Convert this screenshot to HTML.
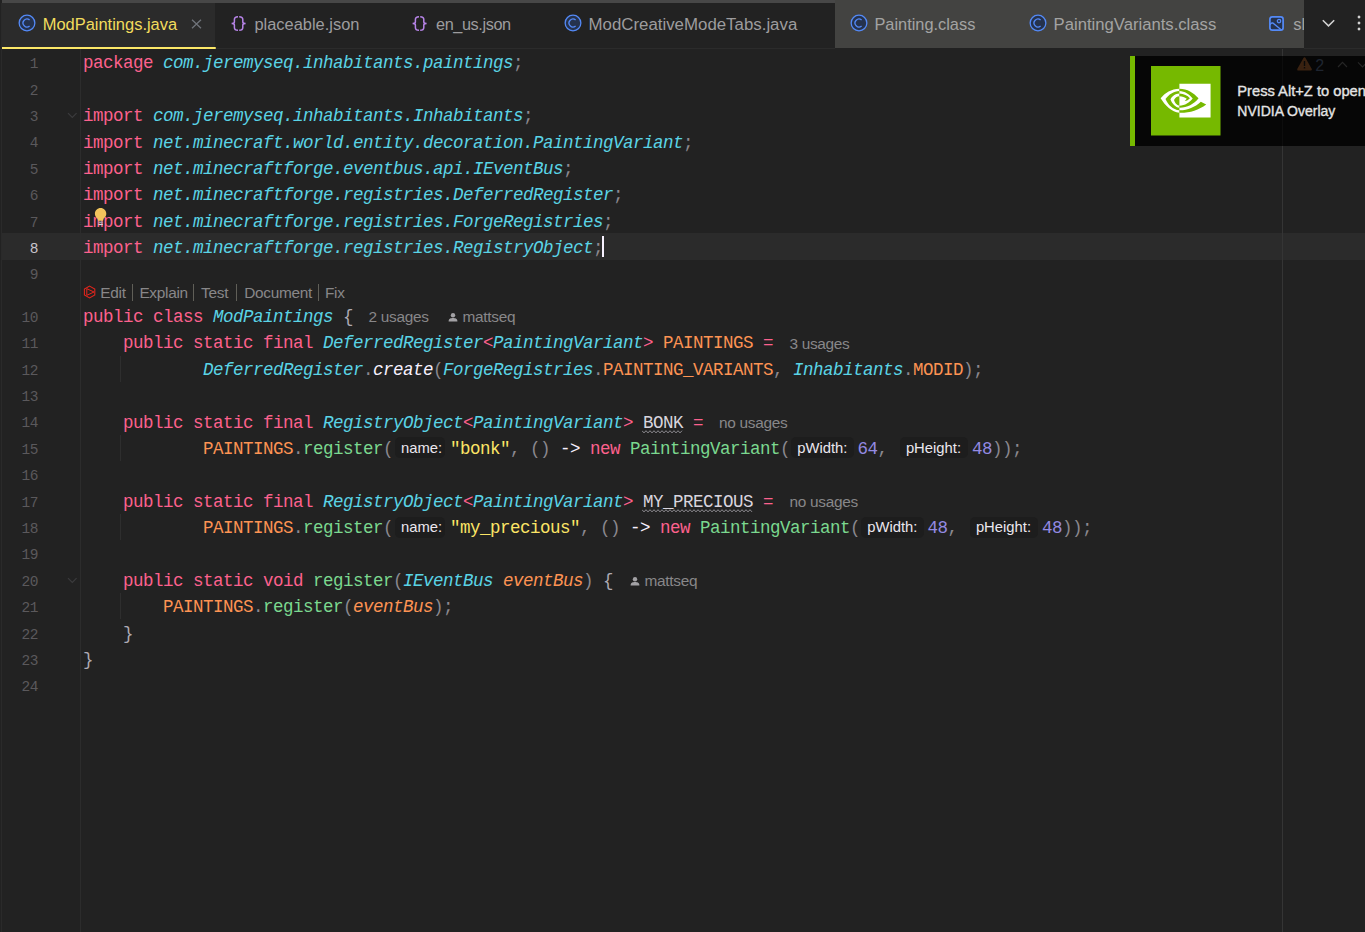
<!DOCTYPE html><html><head><meta charset="utf-8"><style>
*{margin:0;padding:0;box-sizing:border-box}
html,body{width:1365px;height:932px;overflow:hidden;background:#222222}
body{position:relative;font-family:"Liberation Sans",sans-serif}
.a{position:absolute}
.m{position:absolute;font-family:"Liberation Mono",monospace;font-size:17.5px;letter-spacing:-0.500px;white-space:pre;line-height:20px}
.i{font-style:italic}
.ln{position:absolute;font-family:"Liberation Mono",monospace;font-size:14.5px;letter-spacing:-0.5px;white-space:pre;line-height:20px;color:#5b595c;text-align:right;width:60px}
.tab{position:absolute;font-size:16.5px;white-space:pre;line-height:20px;color:#939293}
.hint{position:absolute;font-size:14.8px;white-space:pre;line-height:20px;color:#848286}
.inl{position:absolute;height:21px;border-radius:5px;background:#1d1d1d}
.inlt{position:absolute;font-size:14.8px;white-space:pre;line-height:20px;color:#ebe7ee}
</style></head><body>
<div class="a" style="left:1px;top:3px;width:1px;height:929px;background:#2a2a2a"></div>
<div class="a" style="left:2px;top:0;width:1302px;height:3px;background:#474747"></div>
<div class="a" style="left:835px;top:0;width:469px;height:48px;background:#434341"></div>
<div class="a" style="left:2px;top:3px;width:213px;height:45px;background:#2b2b2b"></div>
<div class="a" style="left:0;top:48px;width:835px;height:1px;background:#2b2b2b"></div>
<div class="a" style="left:1304px;top:48px;width:61px;height:1px;background:#2b2b2b"></div>
<div class="a" style="left:2px;top:46.7px;width:214px;height:2.5px;background:#fde868;border-radius:0 1px 1px 0"></div>
<div class="a" style="left:2px;top:233px;width:1363px;height:27px;background:#2b2b2b"></div>
<div class="a" style="left:80px;top:49px;width:1px;height:883px;background:#2c2c2c"></div>
<div class="a" style="left:1282px;top:49px;width:1px;height:883px;background:#353535"></div>
<div class="ln" style="left:-22px;top:54.24px;color:#5b595c">1</div>
<div class="ln" style="left:-22px;top:80.64px;color:#5b595c">2</div>
<div class="ln" style="left:-22px;top:107.04px;color:#5b595c">3</div>
<div class="ln" style="left:-22px;top:133.44px;color:#5b595c">4</div>
<div class="ln" style="left:-22px;top:159.84px;color:#5b595c">5</div>
<div class="ln" style="left:-22px;top:186.24px;color:#5b595c">6</div>
<div class="ln" style="left:-22px;top:212.64px;color:#5b595c">7</div>
<div class="ln" style="left:-22px;top:239.04px;color:#c8c4cc">8</div>
<div class="ln" style="left:-22px;top:265.44px;color:#5b595c">9</div>
<div class="ln" style="left:-22px;top:307.74px;color:#5b595c">10</div>
<div class="ln" style="left:-22px;top:334.14px;color:#5b595c">11</div>
<div class="ln" style="left:-22px;top:360.54px;color:#5b595c">12</div>
<div class="ln" style="left:-22px;top:386.94px;color:#5b595c">13</div>
<div class="ln" style="left:-22px;top:413.34px;color:#5b595c">14</div>
<div class="ln" style="left:-22px;top:439.74px;color:#5b595c">15</div>
<div class="ln" style="left:-22px;top:466.14px;color:#5b595c">16</div>
<div class="ln" style="left:-22px;top:492.54px;color:#5b595c">17</div>
<div class="ln" style="left:-22px;top:518.94px;color:#5b595c">18</div>
<div class="ln" style="left:-22px;top:545.34px;color:#5b595c">19</div>
<div class="ln" style="left:-22px;top:571.74px;color:#5b595c">20</div>
<div class="ln" style="left:-22px;top:598.14px;color:#5b595c">21</div>
<div class="ln" style="left:-22px;top:624.54px;color:#5b595c">22</div>
<div class="ln" style="left:-22px;top:650.94px;color:#5b595c">23</div>
<div class="ln" style="left:-22px;top:677.34px;color:#5b595c">24</div>
<div class="m" style="left:83.00px;top:53.44px;color:#fc618d">package </div>
<div class="m" style="left:163.00px;top:53.44px;color:#5ad4e6;font-style:italic">com.jeremyseq.inhabitants.paintings</div>
<div class="m" style="left:513.00px;top:53.44px;color:#8b888f">;</div>
<div class="m" style="left:83.00px;top:106.24px;color:#fc618d">import </div>
<div class="m" style="left:153.00px;top:106.24px;color:#5ad4e6;font-style:italic">com.jeremyseq.inhabitants.Inhabitants</div>
<div class="m" style="left:523.00px;top:106.24px;color:#8b888f">;</div>
<div class="m" style="left:83.00px;top:132.64px;color:#fc618d">import </div>
<div class="m" style="left:153.00px;top:132.64px;color:#5ad4e6;font-style:italic">net.minecraft.world.entity.decoration.PaintingVariant</div>
<div class="m" style="left:683.00px;top:132.64px;color:#8b888f">;</div>
<div class="m" style="left:83.00px;top:159.04px;color:#fc618d">import </div>
<div class="m" style="left:153.00px;top:159.04px;color:#5ad4e6;font-style:italic">net.minecraftforge.eventbus.api.IEventBus</div>
<div class="m" style="left:563.00px;top:159.04px;color:#8b888f">;</div>
<div class="m" style="left:83.00px;top:185.44px;color:#fc618d">import </div>
<div class="m" style="left:153.00px;top:185.44px;color:#5ad4e6;font-style:italic">net.minecraftforge.registries.DeferredRegister</div>
<div class="m" style="left:613.00px;top:185.44px;color:#8b888f">;</div>
<div class="m" style="left:83.00px;top:211.84px;color:#fc618d">import </div>
<div class="m" style="left:153.00px;top:211.84px;color:#5ad4e6;font-style:italic">net.minecraftforge.registries.ForgeRegistries</div>
<div class="m" style="left:603.00px;top:211.84px;color:#8b888f">;</div>
<div class="m" style="left:83.00px;top:238.24px;color:#fc618d">import </div>
<div class="m" style="left:153.00px;top:238.24px;color:#5ad4e6;font-style:italic">net.minecraftforge.registries.RegistryObject</div>
<div class="m" style="left:593.00px;top:238.24px;color:#8b888f">;</div>
<div class="m" style="left:83.00px;top:306.94px;color:#fc618d">public class </div>
<div class="m" style="left:213.00px;top:306.94px;color:#5ad4e6;font-style:italic">ModPaintings</div>
<div class="m" style="left:333.00px;top:306.94px;color:#aeaab3"> {</div>
<div class="m" style="left:83.00px;top:333.34px;color:#fc618d">    public static final </div>
<div class="m" style="left:323.00px;top:333.34px;color:#5ad4e6;font-style:italic">DeferredRegister</div>
<div class="m" style="left:483.00px;top:333.34px;color:#fc618d">&lt;</div>
<div class="m" style="left:493.00px;top:333.34px;color:#5ad4e6;font-style:italic">PaintingVariant</div>
<div class="m" style="left:643.00px;top:333.34px;color:#fc618d">&gt;</div>
<div class="m" style="left:653.00px;top:333.34px;color:#fd9353"> PAINTINGS</div>
<div class="m" style="left:753.00px;top:333.34px;color:#fc618d"> =</div>
<div class="m" style="left:83.00px;top:359.74px;color:#5ad4e6;font-style:italic">            DeferredRegister</div>
<div class="m" style="left:363.00px;top:359.74px;color:#8b888f">.</div>
<div class="m" style="left:373.00px;top:359.74px;color:#f7f1ff;font-style:italic">create</div>
<div class="m" style="left:433.00px;top:359.74px;color:#8b888f">(</div>
<div class="m" style="left:443.00px;top:359.74px;color:#5ad4e6;font-style:italic">ForgeRegistries</div>
<div class="m" style="left:593.00px;top:359.74px;color:#8b888f">.</div>
<div class="m" style="left:603.00px;top:359.74px;color:#fd9353">PAINTING_VARIANTS</div>
<div class="m" style="left:773.00px;top:359.74px;color:#8b888f">, </div>
<div class="m" style="left:793.00px;top:359.74px;color:#5ad4e6;font-style:italic">Inhabitants</div>
<div class="m" style="left:903.00px;top:359.74px;color:#8b888f">.</div>
<div class="m" style="left:913.00px;top:359.74px;color:#fd9353">MODID</div>
<div class="m" style="left:963.00px;top:359.74px;color:#8b888f">);</div>
<div class="m" style="left:83.00px;top:412.54px;color:#fc618d">    public static final </div>
<div class="m" style="left:323.00px;top:412.54px;color:#5ad4e6;font-style:italic">RegistryObject</div>
<div class="m" style="left:463.00px;top:412.54px;color:#fc618d">&lt;</div>
<div class="m" style="left:473.00px;top:412.54px;color:#5ad4e6;font-style:italic">PaintingVariant</div>
<div class="m" style="left:623.00px;top:412.54px;color:#fc618d">&gt; </div>
<div class="m" style="left:643.00px;top:412.54px;color:#d9d5de">BONK</div>
<svg class="a" style="left:642.00px;top:430.00px" width="41" height="4" viewBox="0 0 41 4"><path d="M0.0 0.7L2.0 2.9L4.0 0.7L6.0 2.9L8.0 0.7L10.0 2.9L12.0 0.7L14.0 2.9L16.0 0.7L18.0 2.9L20.0 0.7L22.0 2.9L24.0 0.7L26.0 2.9L28.0 0.7L30.0 2.9L32.0 0.7L34.0 2.9L36.0 0.7L38.0 2.9L40.0 0.7" stroke="#8d8b90" stroke-width="1" fill="none"/></svg>
<div class="m" style="left:683.00px;top:412.54px;color:#fc618d"> =</div>
<div class="m" style="left:83.00px;top:438.94px;color:#fd9353">            PAINTINGS</div>
<div class="m" style="left:293.00px;top:438.94px;color:#8b888f">.</div>
<div class="m" style="left:303.00px;top:438.94px;color:#7bd88f">register</div>
<div class="m" style="left:383.00px;top:438.94px;color:#8b888f">(</div>
<div class="inl" style="left:394.70px;top:437.40px;width:50.50px"></div>
<div class="inlt" style="left:401.00px;top:437.67px;font-size:14.8px">name:</div>
<div class="m" style="left:450.10px;top:438.94px;color:#fce566">&quot;bonk&quot;</div>
<div class="m" style="left:510.10px;top:438.94px;color:#8b888f">, () </div>
<div class="m" style="left:560.10px;top:438.94px;color:#f7f1ff">-&gt; </div>
<div class="m" style="left:590.10px;top:438.94px;color:#fc618d">new </div>
<div class="m" style="left:630.10px;top:438.94px;color:#7bd88f">PaintingVariant</div>
<div class="m" style="left:780.10px;top:438.94px;color:#8b888f">(</div>
<div class="inl" style="left:790.90px;top:437.40px;width:63.00px"></div>
<div class="inlt" style="left:797.20px;top:437.67px;font-size:14.8px">pWidth:</div>
<div class="m" style="left:857.50px;top:438.94px;color:#948ae3">64</div>
<div class="m" style="left:877.50px;top:438.94px;color:#8b888f">, </div>
<div class="inl" style="left:899.60px;top:437.40px;width:68.00px"></div>
<div class="inlt" style="left:905.90px;top:437.67px;font-size:14.8px">pHeight:</div>
<div class="m" style="left:972.00px;top:438.94px;color:#948ae3">48</div>
<div class="m" style="left:992.00px;top:438.94px;color:#8b888f">));</div>
<div class="m" style="left:83.00px;top:491.74px;color:#fc618d">    public static final </div>
<div class="m" style="left:323.00px;top:491.74px;color:#5ad4e6;font-style:italic">RegistryObject</div>
<div class="m" style="left:463.00px;top:491.74px;color:#fc618d">&lt;</div>
<div class="m" style="left:473.00px;top:491.74px;color:#5ad4e6;font-style:italic">PaintingVariant</div>
<div class="m" style="left:623.00px;top:491.74px;color:#fc618d">&gt; </div>
<div class="m" style="left:643.00px;top:491.74px;color:#d9d5de">MY_PRECIOUS</div>
<svg class="a" style="left:642.00px;top:509.20px" width="111" height="4" viewBox="0 0 111 4"><path d="M0.0 0.7L2.0 2.9L4.0 0.7L6.0 2.9L8.0 0.7L10.0 2.9L12.0 0.7L14.0 2.9L16.0 0.7L18.0 2.9L20.0 0.7L22.0 2.9L24.0 0.7L26.0 2.9L28.0 0.7L30.0 2.9L32.0 0.7L34.0 2.9L36.0 0.7L38.0 2.9L40.0 0.7L42.0 2.9L44.0 0.7L46.0 2.9L48.0 0.7L50.0 2.9L52.0 0.7L54.0 2.9L56.0 0.7L58.0 2.9L60.0 0.7L62.0 2.9L64.0 0.7L66.0 2.9L68.0 0.7L70.0 2.9L72.0 0.7L74.0 2.9L76.0 0.7L78.0 2.9L80.0 0.7L82.0 2.9L84.0 0.7L86.0 2.9L88.0 0.7L90.0 2.9L92.0 0.7L94.0 2.9L96.0 0.7L98.0 2.9L100.0 0.7L102.0 2.9L104.0 0.7L106.0 2.9L108.0 0.7L110.0 2.9" stroke="#8d8b90" stroke-width="1" fill="none"/></svg>
<div class="m" style="left:753.00px;top:491.74px;color:#fc618d"> =</div>
<div class="m" style="left:83.00px;top:518.14px;color:#fd9353">            PAINTINGS</div>
<div class="m" style="left:293.00px;top:518.14px;color:#8b888f">.</div>
<div class="m" style="left:303.00px;top:518.14px;color:#7bd88f">register</div>
<div class="m" style="left:383.00px;top:518.14px;color:#8b888f">(</div>
<div class="inl" style="left:394.70px;top:516.60px;width:50.50px"></div>
<div class="inlt" style="left:401.00px;top:516.87px;font-size:14.8px">name:</div>
<div class="m" style="left:450.10px;top:518.14px;color:#fce566">&quot;my_precious&quot;</div>
<div class="m" style="left:580.10px;top:518.14px;color:#8b888f">, () </div>
<div class="m" style="left:630.10px;top:518.14px;color:#f7f1ff">-&gt; </div>
<div class="m" style="left:660.10px;top:518.14px;color:#fc618d">new </div>
<div class="m" style="left:700.10px;top:518.14px;color:#7bd88f">PaintingVariant</div>
<div class="m" style="left:850.10px;top:518.14px;color:#8b888f">(</div>
<div class="inl" style="left:860.90px;top:516.60px;width:63.00px"></div>
<div class="inlt" style="left:867.20px;top:516.87px;font-size:14.8px">pWidth:</div>
<div class="m" style="left:927.50px;top:518.14px;color:#948ae3">48</div>
<div class="m" style="left:947.50px;top:518.14px;color:#8b888f">, </div>
<div class="inl" style="left:969.60px;top:516.60px;width:68.00px"></div>
<div class="inlt" style="left:975.90px;top:516.87px;font-size:14.8px">pHeight:</div>
<div class="m" style="left:1042.00px;top:518.14px;color:#948ae3">48</div>
<div class="m" style="left:1062.00px;top:518.14px;color:#8b888f">));</div>
<div class="m" style="left:83.00px;top:570.94px;color:#fc618d">    public static void </div>
<div class="m" style="left:313.00px;top:570.94px;color:#7bd88f">register</div>
<div class="m" style="left:393.00px;top:570.94px;color:#8b888f">(</div>
<div class="m" style="left:403.00px;top:570.94px;color:#5ad4e6;font-style:italic">IEventBus </div>
<div class="m" style="left:503.00px;top:570.94px;color:#fd9353;font-style:italic">eventBus</div>
<div class="m" style="left:583.00px;top:570.94px;color:#8b888f">) </div>
<div class="m" style="left:603.00px;top:570.94px;color:#aeaab3">{</div>
<div class="m" style="left:83.00px;top:597.34px;color:#fd9353">        PAINTINGS</div>
<div class="m" style="left:253.00px;top:597.34px;color:#8b888f">.</div>
<div class="m" style="left:263.00px;top:597.34px;color:#7bd88f">register</div>
<div class="m" style="left:343.00px;top:597.34px;color:#8b888f">(</div>
<div class="m" style="left:353.00px;top:597.34px;color:#fd9353;font-style:italic">eventBus</div>
<div class="m" style="left:433.00px;top:597.34px;color:#8b888f">);</div>
<div class="m" style="left:83.00px;top:623.74px;color:#aeaab3">    }</div>
<div class="m" style="left:83.00px;top:650.14px;color:#aeaab3">}</div>
<svg class="a" style="left:17.50px;top:14.45px" width="18" height="18" viewBox="0 0 18 18"><circle cx="9" cy="9" r="7.85" fill="#25324d" stroke="#548af7" stroke-width="1.3"/><path d="M11.6 6.1 A3.9 3.9 0 1 0 11.6 11.9" fill="none" stroke="#548af7" stroke-width="1.3"/></svg>
<div class="tab" style="left:42.70px;top:14.29px;font-size:16.47px;color:#f2dc5d">ModPaintings.java</div>
<svg class="a" style="left:191px;top:18.5px" width="11" height="10" viewBox="0 0 11 10"><path d="M1 0.7 L10 9.3 M10 0.7 L1 9.3" stroke="#70747b" stroke-width="1.25"/></svg>
<svg class="a" style="left:230.60px;top:16.20px" width="16" height="16" viewBox="0 0 16 16"><path d="M7 0.8 C4.6 0.8 3.4 1.6 3.4 3.6 V6 C3.4 7 2.6 7.5 0.6 7.5 C2.6 7.5 3.4 8 3.4 9 V11.4 C3.4 13.4 4.6 14.2 7 14.2" fill="none" stroke="#b784e8" stroke-width="1.5"/><path d="M8.2 0.8 C10.6 0.8 11.8 1.6 11.8 3.6 V6 C11.8 7 12.6 7.5 14.6 7.5 C12.6 7.5 11.8 8 11.8 9 V11.4 C11.8 13.4 10.6 14.2 8.2 14.2" fill="none" stroke="#b784e8" stroke-width="1.5"/></svg>
<div class="tab" style="left:254.40px;top:14.30px;font-size:16.44px;color:#9d9c9e">placeable.json</div>
<svg class="a" style="left:412.40px;top:16.20px" width="16" height="16" viewBox="0 0 16 16"><path d="M7 0.8 C4.6 0.8 3.4 1.6 3.4 3.6 V6 C3.4 7 2.6 7.5 0.6 7.5 C2.6 7.5 3.4 8 3.4 9 V11.4 C3.4 13.4 4.6 14.2 7 14.2" fill="none" stroke="#b784e8" stroke-width="1.5"/><path d="M8.2 0.8 C10.6 0.8 11.8 1.6 11.8 3.6 V6 C11.8 7 12.6 7.5 14.6 7.5 C12.6 7.5 11.8 8 11.8 9 V11.4 C11.8 13.4 10.6 14.2 8.2 14.2" fill="none" stroke="#b784e8" stroke-width="1.5"/></svg>
<div class="tab" style="left:436.00px;top:14.35px;font-size:16.3px;color:#9d9c9e;letter-spacing:-0.4px">en_us.json</div>
<svg class="a" style="left:563.70px;top:14.45px" width="18" height="18" viewBox="0 0 18 18"><circle cx="9" cy="9" r="7.85" fill="#25324d" stroke="#548af7" stroke-width="1.3"/><path d="M11.6 6.1 A3.9 3.9 0 1 0 11.6 11.9" fill="none" stroke="#548af7" stroke-width="1.3"/></svg>
<div class="tab" style="left:588.50px;top:14.76px;font-size:16.85px;color:#9d9c9e">ModCreativeModeTabs.java</div>
<svg class="a" style="left:849.60px;top:14.45px" width="18" height="18" viewBox="0 0 18 18"><circle cx="9" cy="9" r="7.85" fill="#25324d" stroke="#548af7" stroke-width="1.3"/><path d="M11.6 6.1 A3.9 3.9 0 1 0 11.6 11.9" fill="none" stroke="#548af7" stroke-width="1.3"/></svg>
<div class="tab" style="left:874.40px;top:14.32px;font-size:16.37px;color:#a3a3a3">Painting.class</div>
<svg class="a" style="left:1028.50px;top:14.45px" width="18" height="18" viewBox="0 0 18 18"><circle cx="9" cy="9" r="7.85" fill="#25324d" stroke="#548af7" stroke-width="1.3"/><path d="M11.6 6.1 A3.9 3.9 0 1 0 11.6 11.9" fill="none" stroke="#548af7" stroke-width="1.3"/></svg>
<div class="tab" style="left:1053.60px;top:14.82px;font-size:16.67px;color:#a3a3a3">PaintingVariants.class</div>
<svg class="a" style="left:1268px;top:15px" width="17" height="17" viewBox="0 0 17 17"><rect x="1.9" y="1.9" width="13.2" height="13.2" rx="2.4" fill="#25324d" stroke="#548af7" stroke-width="1.7"/><circle cx="11" cy="6.1" r="1.7" fill="none" stroke="#548af7" stroke-width="1.3"/><path d="M1.9 9.8 Q3.2 7.6 4.8 7.9 L13.5 15" fill="none" stroke="#548af7" stroke-width="1.3"/></svg>
<div class="a" style="left:1290px;top:0;width:14px;height:48px;overflow:hidden"><div class="tab" style="left:3.30px;top:14.38px;font-size:16.5px;color:#a3a3a3">slots</div></div>
<svg class="a" style="left:1322px;top:19px" width="13" height="9" viewBox="0 0 13 9"><path d="M0.8 1.2 L6.5 6.9 L12.2 1.2" fill="none" stroke="#d4d4d4" stroke-width="1.5"/></svg>
<svg class="a" style="left:1357.10px;top:15.20px" width="4" height="4" viewBox="0 0 4 4"><path d="M2 0.3 L3.7 2 L2 3.7 L0.3 2 Z" fill="#d6d6d6"/></svg>
<svg class="a" style="left:1357.10px;top:21.20px" width="4" height="4" viewBox="0 0 4 4"><path d="M2 0.3 L3.7 2 L2 3.7 L0.3 2 Z" fill="#d6d6d6"/></svg>
<svg class="a" style="left:1357.10px;top:27.20px" width="4" height="4" viewBox="0 0 4 4"><path d="M2 0.3 L3.7 2 L2 3.7 L0.3 2 Z" fill="#d6d6d6"/></svg>
<div class="a" style="left:120px;top:355.80px;width:1px;height:26px;background:#2e2e2e"></div>
<div class="a" style="left:120px;top:435.00px;width:1px;height:26px;background:#2e2e2e"></div>
<div class="a" style="left:120px;top:514.20px;width:1px;height:26px;background:#2e2e2e"></div>
<div class="a" style="left:120px;top:593.40px;width:1px;height:26px;background:#2e2e2e"></div>
<svg class="a" style="left:67px;top:112.00px" width="11" height="7" viewBox="0 0 11 7"><path d="M1 1.2 L5.3 5.5 L9.6 1.2" fill="none" stroke="#3b3b3d" stroke-width="1.2"/></svg>
<svg class="a" style="left:67px;top:576.50px" width="11" height="7" viewBox="0 0 11 7"><path d="M1 1.2 L5.3 5.5 L9.6 1.2" fill="none" stroke="#3b3b3d" stroke-width="1.2"/></svg>
<svg class="a" style="left:83px;top:285.4px" width="14" height="14" viewBox="0 0 14 14"><path d="M6.6 1.1 L11.8 4.05 V9.95 L6.6 12.9 L1.4 9.95 V4.05 Z" fill="none" stroke="#e5251c" stroke-width="1.05"/><path d="M3.8 3.7 V10.3 L11 7 Z" fill="none" stroke="#e5251c" stroke-width="1.0"/></svg>
<div class="hint" style="left:100.30px;top:282.86px;font-size:15.4px;color:#888789;letter-spacing:-0.3px">Edit</div>
<div class="hint" style="left:139.40px;top:282.86px;font-size:15.4px;color:#888789;letter-spacing:-0.3px">Explain</div>
<div class="hint" style="left:201.10px;top:282.86px;font-size:15.4px;color:#888789;letter-spacing:-0.3px">Test</div>
<div class="hint" style="left:244.30px;top:282.86px;font-size:15.4px;color:#888789;letter-spacing:-0.3px">Document</div>
<div class="hint" style="left:325.00px;top:282.86px;font-size:15.4px;color:#888789;letter-spacing:-0.3px">Fix</div>
<div class="a" style="left:131.90px;top:284px;width:1px;height:17px;background:#605f58"></div>
<div class="a" style="left:192.50px;top:284px;width:1px;height:17px;background:#605f58"></div>
<div class="a" style="left:236.10px;top:284px;width:1px;height:17px;background:#605f58"></div>
<div class="a" style="left:317.70px;top:284px;width:1px;height:17px;background:#605f58"></div>
<div class="hint" style="left:368.60px;top:307.26px;font-size:15.4px;color:#888789;letter-spacing:-0.3px">2 usages</div>
<svg class="a" style="left:447.60px;top:313.00px" width="10" height="9" viewBox="0 0 10 9"><circle cx="5" cy="2.3" r="2.2" fill="#a3a2a5"/><path d="M0.6 8.6 C0.6 5.6 2.6 5.1 5 5.1 C7.4 5.1 9.4 5.6 9.4 8.6 Z" fill="#a3a2a5"/></svg>
<div class="hint" style="left:462.60px;top:307.26px;font-size:15.4px;color:#888789;letter-spacing:-0.3px">mattseq</div>
<div class="hint" style="left:789.40px;top:333.66px;font-size:15.4px;color:#888789;letter-spacing:-0.3px">3 usages</div>
<div class="hint" style="left:719.00px;top:412.86px;font-size:15.4px;color:#888789;letter-spacing:-0.3px">no usages</div>
<div class="hint" style="left:789.50px;top:492.06px;font-size:15.4px;color:#888789;letter-spacing:-0.3px">no usages</div>
<svg class="a" style="left:629.80px;top:577.00px" width="10" height="9" viewBox="0 0 10 9"><circle cx="5" cy="2.3" r="2.2" fill="#a3a2a5"/><path d="M0.6 8.6 C0.6 5.6 2.6 5.1 5 5.1 C7.4 5.1 9.4 5.6 9.4 8.6 Z" fill="#a3a2a5"/></svg>
<div class="hint" style="left:644.50px;top:571.26px;font-size:15.4px;color:#888789;letter-spacing:-0.3px">mattseq</div>
<svg class="a" style="left:93px;top:206.2px" width="15" height="21" viewBox="0 0 15 21"><path d="M7.6 2.1 C4.4 2.1 1.9 4.6 1.9 7.8 C1.9 9.9 3.0 11.3 4.5 12.6 L5.2 14.8 H10 L10.7 12.6 C12.2 11.3 13.3 9.9 13.3 7.8 C13.3 4.6 10.8 2.1 7.6 2.1 Z" fill="#f2c55c"/><rect x="5.4" y="15.6" width="4.4" height="1.3" fill="#a8a8a8"/><rect x="5.4" y="17.8" width="4.4" height="1.3" fill="#d8d8d8"/></svg>
<div class="a" style="left:602px;top:236px;width:2px;height:21px;background:#f7f1ff"></div>
<div class="a" style="left:1130px;top:56px;width:235px;height:90px;background:rgba(4,4,4,0.93)"></div>
<div class="a" style="left:1282px;top:56px;width:1px;height:90px;background:#0d0d0d"></div>
<svg class="a" style="left:1297px;top:57px" width="15" height="14" viewBox="0 0 15 14"><path d="M7.5 1.6 L13.6 12.4 H1.4 Z" fill="#3a2211" stroke="#3a2211" stroke-linejoin="round" stroke-width="2.4"/><rect x="6.8" y="4" width="1.4" height="5" fill="#0a0a0a"/><rect x="6.8" y="10" width="1.4" height="1.4" fill="#0a0a0a"/></svg>
<div class="tab" style="left:1315.30px;top:55.65px;font-size:16px;color:#1f2530">2</div>
<svg class="a" style="left:1337px;top:61px" width="11" height="7" viewBox="0 0 11 7"><path d="M1 6 L5.5 1.4 L10 6" fill="none" stroke="#262626" stroke-width="1.2"/></svg>
<svg class="a" style="left:1357px;top:61px" width="11" height="7" viewBox="0 0 11 7"><path d="M1 1.4 L5.5 6 L10 1.4" fill="none" stroke="#262626" stroke-width="1.2"/></svg>
<div class="a" style="left:1130px;top:56px;width:5px;height:90px;background:#76b900"></div>
<svg class="a" style="left:1151.2px;top:66.2px" width="69.5" height="69.5" viewBox="0 0 70 70"><rect x="0" y="0" width="70" height="70" fill="#76b900"/><path d="M28.6 17.8 H60 V51.8 H28.6 Z" fill="#fff"/><path d="M28.6 22.8 C20.5 22.9 14 27 9.7 32.5 C14 39.5 21 46.8 28.6 47.1 V44.6 C22 44 17 39 14.6 33.2 C18 28.6 22.5 25.4 28.6 25.1 Z" fill="#fff"/><path d="M28.6 27.8 C24.5 28 21.2 30.5 19.6 33.6 C21.2 38.2 24.6 41.8 28.6 42.1 V40.1 C25.8 39.6 23.9 37.2 23.2 34.3 C24.3 32 26.2 30.7 28.6 30.5 Z" fill="#fff"/><path d="M28.6 22.8 C36.5 22.9 43 26.8 47.9 32.6 C43 38.8 36 42.3 28.6 42.1 V40.1 C34.2 39.9 38.8 36.8 42 32.8 C38.5 28.2 34 25.3 28.6 25.1 Z" fill="#76b900"/><path d="M28.6 27.8 C33.2 27.9 36.6 29.8 39.2 32.6 C37.8 34.3 36 35.2 34 35.3 L36 33 C34 31.4 31.5 30.5 28.6 30.5 Z" fill="#76b900"/><path d="M28.6 44.6 C36.5 44.8 44 41.5 50.2 35.9 L55.6 38.7 C48 44.5 38.5 47.4 28.6 47.1 Z" fill="#76b900"/></svg>
<div class="a" style="left:1237.3px;top:78px;width:128px;height:48px;overflow:hidden"><div class="tab" style="left:0.00px;top:2.90px;font-size:14.7px;color:#e4e4e4;-webkit-text-stroke:0.35px #e4e4e4">Press Alt+Z to open</div><div class="tab" style="left:0.00px;top:23.15px;font-size:14px;color:#e4e4e4;-webkit-text-stroke:0.35px #e4e4e4">NVIDIA Overlay</div></div>
</body></html>
